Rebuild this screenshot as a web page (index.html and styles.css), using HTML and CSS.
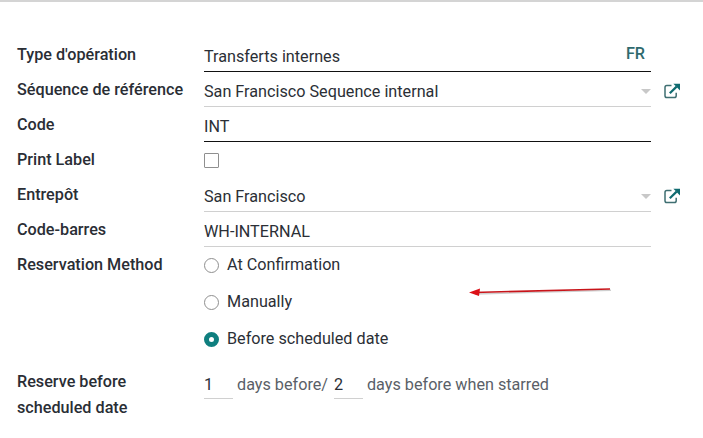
FILE: index.html
```html
<!DOCTYPE html>
<html lang="en">
<head>
    <meta charset="UTF-8">
    <meta name="viewport" content="width=device-width, initial-scale=1.0">
    <title>Type d'opération</title>
    <link rel="stylesheet" href="styles.css">
</head>

<body>
    <div class="sheet">
        <div class="row">
            <div class="label">Type d'opération</div>
            <div class="field dark"><span class="value">Transferts internes</span><span class="lang">FR</span></div>
        </div>
        <div class="row">
            <div class="label">Séquence de référence</div>
            <div class="field"><span class="value">San Francisco Sequence internal</span><span class="caret"></span></div>
            <svg class="ext" viewBox="0 0 16 16"><use href="#ext-link"></use></svg>
        </div>
        <div class="row">
            <div class="label">Code</div>
            <div class="field dark"><span class="value">INT</span></div>
        </div>
        <div class="row">
            <div class="label">Print Label</div>
            <div class="check-cell"><span class="check"></span></div>
        </div>
        <div class="row">
            <div class="label">Entrepôt</div>
            <div class="field"><span class="value">San Francisco</span><span class="caret"></span></div>
            <svg class="ext" viewBox="0 0 16 16"><use href="#ext-link"></use></svg>
        </div>
        <div class="row">
            <div class="label">Code-barres</div>
            <div class="field"><span class="value">WH-INTERNAL</span></div>
        </div>
        <div class="row row-radios">
            <div class="label">Reservation Method</div>
            <div class="radios">
                <div class="radio-line"><span class="radio"></span>At Confirmation</div>
                <div class="radio-line"><span class="radio"></span>Manually</div>
                <div class="radio-line"><span class="radio on"></span>Before scheduled date</div>
            </div>
        </div>
        <div class="row row-days">
            <div class="label">Reserve before<br>scheduled date</div>
            <div class="days">
                <span class="num">1</span>
                <span class="muted">days before/</span>
                <span class="num">2</span>
                <span class="muted">days before when starred</span>
            </div>
        </div>
    </div>

    <!-- red arrow drawn over the screenshot -->
    <svg class="arrow" viewBox="0 0 150 16">
        <path d="M8 9 L144 5.2" class="arrow-shadow"></path>
        <path d="M7 7.5 L143 4" class="arrow-line"></path>
        <path d="M2 7.6 L13 3.5 L12 11 Z" class="arrow-head"></path>
    </svg>

    <svg class="defs" width="0" height="0">
        <symbol id="ext-link" viewBox="0 0 16 16">
            <path d="M7.5 2.6 H2.8 Q1 2.6 1 4.4 V12.8 Q1 14.6 2.8 14.6 H10.4 Q12.2 14.6 12.2 12.8 V9.8" fill="none" stroke="#3f6f72" stroke-width="1.5"></path>
            <path d="M5.8 10.2 L12.6 3.6" fill="none" stroke="#0f6b70" stroke-width="2.2"></path>
            <path d="M9.4 0.8 H16 V7.4 Z" fill="#0f6b70"></path>
        </symbol>
    </svg>
</body>
</html>
```

FILE: styles.css
```css
/* General Styles */
body {
    font-family: Roboto, "Liberation Sans", sans-serif;
    font-size: 16.2px;
    background-color: #fff;
    color: #2b2f36;
    margin: 0;
    padding: 0;
    height: 438px;
    overflow: hidden;
    position: relative;
}

.sheet {
    border-top: 2px solid #d4d4d4;
    padding: 35px 0 0 17px;
}

/* Rows */
.row {
    display: flex;
    height: 35px;
}

.label {
    width: 187px;
    flex: none;
    font-weight: 500;
    line-height: 35px;
    height: 35px;
    color: #2a2e35;
}

.field {
    width: 447px;
    height: 35px;
    box-sizing: border-box;
    flex: none;
    display: flex;
    align-items: center;
    justify-content: space-between;
    border-bottom: 1px solid #d0d0d0;
    padding-top: 4px;
}

.field.dark {
    border-bottom-color: #111;
}

.lang {
    color: #2f6a6e;
    font-weight: 500;
    margin-right: 6px;
    margin-top: -5px;
}

.caret {
    width: 0;
    height: 0;
    border-left: 5px solid transparent;
    border-right: 5px solid transparent;
    border-top: 5px solid #c8c8c8;
}

.ext {
    width: 16px;
    height: 16px;
    margin: 11px 0 0 13px;
    flex: none;
}

.defs {
    position: absolute;
}

/* Checkbox */
.check-cell {
    padding-top: 11px;
}

.check {
    display: block;
    width: 13px;
    height: 13px;
    border: 1px solid #8f8f8f;
    border-radius: 1px;
}

/* Radios */
.row-radios {
    height: 122px;
}

.radios {
    display: flex;
    flex-direction: column;
    margin-top: -1px;
}

.radio-line {
    display: flex;
    align-items: center;
    height: 37px;
}

.radio {
    width: 13px;
    height: 13px;
    border: 1px solid #8f8f8f;
    border-radius: 50%;
    margin: 2px 8px 0 0;
    flex: none;
}

.radio.on {
    width: 5px;
    height: 5px;
    border: 5px solid #0f7f7f;
}

/* Reserve days */
.row-days {
    height: auto;
}

.row-days .label {
    line-height: 26px;
    height: auto;
}

.days {
    display: flex;
    height: 26px;
    line-height: 26px;
    margin-top: 3px;
}

.num {
    width: 29px;
    height: 26px;
    border-bottom: 1px solid #d0d0d0;
}

.muted {
    color: #5a5f68;
    margin: 0 6px 0 4px;
}

/* Annotation arrow */
.arrow {
    position: absolute;
    left: 467px;
    top: 285px;
    width: 150px;
    height: 16px;
}

.arrow-line {
    fill: none;
    stroke: #c8141a;
    stroke-width: 1.6;
}

.arrow-shadow {
    fill: none;
    stroke: #cfcfcf;
    stroke-width: 1.4;
}

.arrow-head {
    fill: #dc1118;
}
```
